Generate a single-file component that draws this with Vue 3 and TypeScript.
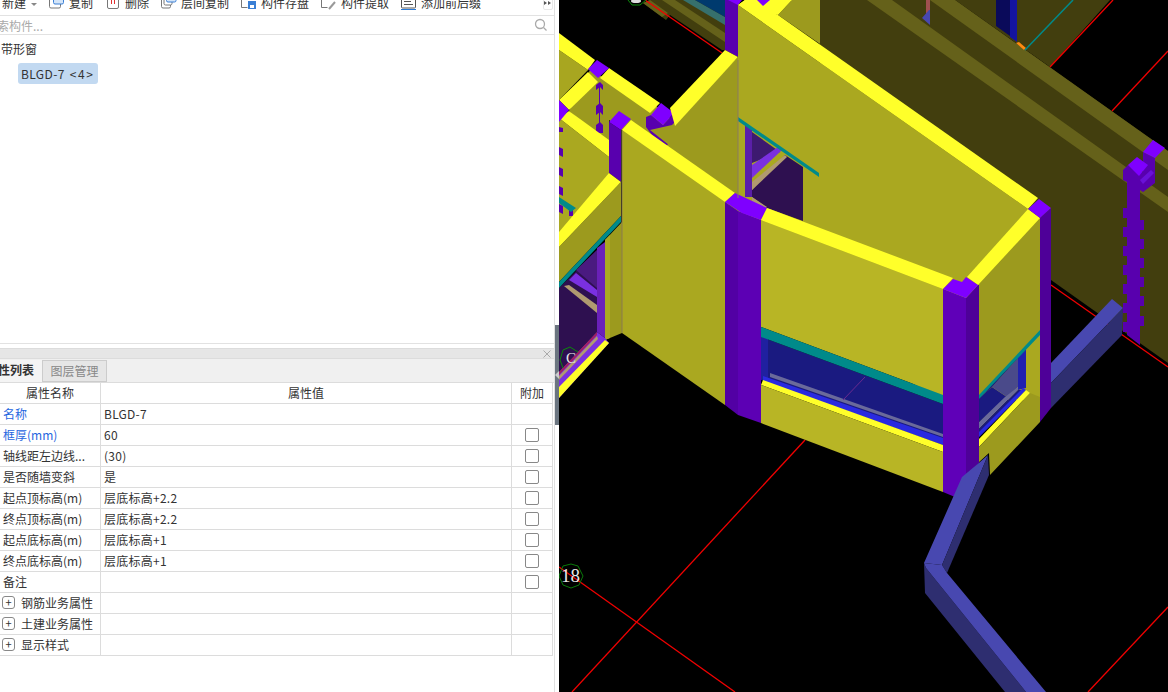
<script setup lang="ts">
type Tool = { name: string; icon: string };
type Row = { label: string; value?: string; blue?: boolean; check?: boolean; group?: boolean };

const tools: Tool[] = [
  { name: "复制", icon: "copy" },
  { name: "删除", icon: "del" },
  { name: "层间复制", icon: "floor" },
  { name: "构件存盘", icon: "save" },
  { name: "构件提取", icon: "pick" },
  { name: "添加前后缀", icon: "fix" },
];

const rows: Row[] = [
  { label: "名称", value: "BLGD-7", blue: true },
  { label: "框厚(mm)", value: "60", blue: true, check: true },
  { label: "轴线距左边线...", value: "(30)", check: true },
  { label: "是否随墙变斜", value: "是", check: true },
  { label: "起点顶标高(m)", value: "层底标高+2.2", check: true },
  { label: "终点顶标高(m)", value: "层底标高+2.2", check: true },
  { label: "起点底标高(m)", value: "层底标高+1", check: true },
  { label: "终点底标高(m)", value: "层底标高+1", check: true },
  { label: "备注", check: true },
  { label: "钢筋业务属性", group: true },
  { label: "土建业务属性", group: true },
  { label: "显示样式", group: true },
];

const Y = "#ffff2a";
const P = "#7f00ff";
const PD = "#5800ae";
const PE = "#4e0098";
const O = "#aaa820";
const OD = "#9c9a1e";
const OB = "#b8b525";
const DK = "#423e0e";
const BD = "#65611a";
const T = "#008a8a";
const IN = "#4848b0";
const IS = "#2e2e70";

// 背景墙和红色轴线分开画，后面的盖住前面的
const back: [string, string][] = [
  [DK, "643,3 666,20 670,15 722,50 725,50 725,0 650,0"],
  [BD, "662,0 725,42 725,33 675,0"],
  [BD, "650,0 668,13 662,17 643,3"],
  ["#36706c", "683,0 725,25 725,17 695,0"],
  ["#003a6e", "695,0 725,0 725,17"],
  [DK, "955,0 1110,0 1050,67"],
  [DK, "820,0 955,0 1168,151 1168,363 1051,280 1040,272 820,100"],
  [BD, "930,0 955,0 1168,151 1168,170"],
  [BD, "867,0 892,0 1168,197 1168,212"],
  ["#0a0a5a", "996,0 1010,0 1010,36 996,26"],
  ["#1414a0", "1010,0 1017,0 1017,42 1010,37"],
  ["#ff8a10", "1016,43 1019,42 1026,48 1024,50"],
  ["#a05050", "926,0 930,0 930,10 926,14"],
  [IN, "922,18 929,10 930,10 930,25"],
];

const scene: [string, string][] = [
  // 右侧竖向构件
  [PD, "1143,152 1155,158 1155,183 1143,192"],
  [P, "1143,152 1153,140 1165,148 1155,158"],
  [PD, "1123,170 1128,165 1155,178 1143,192 1140,190 1140,345 1127,335 1127,182 1123,180"],
  ["#6a10d8", "1140,180 1151,170 1154,173 1143,184"],
  [P, "1128,165 1137,157 1148,165 1139,176"],
  // 主墙和窗洞
  [PD, "725,0 738,0 738,57 725,50"],
  [P, "728,0 742,0 738,5"],
  [O, "738,5 1028,209 1040,218 1040,400 943,400 761,300 738,300"],
  [OD, "778,15 792,0 820,0 820,44"],
  [Y, "768,13 792,0 782,0 768,0 745,0 738,5 778,15"],
  [Y, "738,5 745,0 778,15 1038,198 1028,209"],
  [P, "757,0 770,0 763,6"],
  [Y, "768,13 782,0 792,0 778,15"],
  ["#5a1fa8", "745,125 752,130 752,197 745,197"],
  ["#2e1050", "752,190 785,155 803,167 803,221 767,208 752,197"],
  ["#3d1a70", "752,132 780,152 752,163"],
  ["#7a30e0", "752,165 778,147 782,150 752,178"],
  ["#b09a70", "752,182 785,155 787,157 752,190"],
  ["#b09a70", "752,197 767,207 765,208 752,202"],
  [T, "738,117 819,173 819,177 738,121"],
  // 左上
  ["#a8a620", "559,50 588,70 559,100"],
  [OD, "569,111 590,70 655,105 672,120 738,170 738,300 622,130 609,120 609,145"],
  [Y, "559,33 595,60 588,70 559,50"],
  [Y, "559,100 588,72 598,82 569,110"],
  [Y, "609,68 660,103 650,113 600,78"],
  [P, "588,69 597,60 609,68 598,78"],
  [PD, "599,83 600,83 600,125 599,125"],
  [PD, "596,85 600,82 603,85 603,90 600,87 596,90"],
  [PD, "596,106 600,103 603,106 603,115 600,112 596,115"],
  [PD, "596,125 600,122 603,125 603,133 596,133"],
  [O, "559,118 609,157 609,175 559,236"],
  [Y, "559,118 569,111 609,140 609,157"],
  [P, "559,100 569,110 559,122"],
  [PD, "559,127 563,128 563,132 559,132"],
  [PD, "559,147 563,149 563,157 559,155"],
  [PD, "559,167 563,169 563,177 559,175"],
  [PD, "559,186 563,188 563,196 559,194"],
  [PD, "559,204 563,206 563,214 559,212"],
  [PD, "569,208 573,210 573,216 569,216"],
  [T, "559,197 576,208 571,212 559,203"],
  [PD, "646,117 651,115 663,125 674,113 674,137 663,150 646,127"],
  [P, "651,115 661,103 674,113 663,125"],
  [PD, "609,122 621,130 621,182 609,173"],
  [P, "609,122 619,111 631,119 621,130"],
  // 中部墙
  [OD, "672,125 738,57 738,200 650,130"],
  [Y, "670,108 725,50 738,57 675,126"],
  [O, "622,130 725,202 725,405 622,333"],
  [Y, "622,130 631,120 735,193 725,202"],
  // 左下窗
  [OD, "559,247 621,182 621,216 559,282"],
  [Y, "559,232 609,173 621,182 559,247"],
  ["#2e1050", "559,288 597,250 597,332 559,372"],
  ["#4a1a80", "576,270 597,250 597,288"],
  ["#7a30e0", "569,280 576,273 597,290 597,297"],
  ["#b09a70", "564,286 569,285 597,305 597,313"],
  ["#6a20b8", "597,248 605,242 605,338 597,332"],
  [OD, "605,240 622,222 622,333 605,340"],
  [O, "605,240 610,235 610,338 605,340"],
  [T, "559,282 621,216 621,222 559,288"],
  ["#7a30e0", "559,372 597,332 605,338 609,343 559,398"],
  ["#b09a70", "559,376 597,336 598,339 559,380"],
  ["#a02060", "559,372 597,332 597,335 559,375"],
  [Y, "559,387 605,340 609,343 559,398"],
  // 转角柱
  ["#5200a4", "725,202 738,211 738,415 725,405"],
  ["#5c00b4", "738,211 761,220 761,423 738,415"],
  [P, "725,202 735,193 767,208 761,220 742,213"],
  // 前窗墙
  [OB, "761,220 943,289 943,395 761,327"],
  [Y, "761,220 767,208 953,278 943,289"],
  ["#1a1a80", "761,337 943,404 943,445 761,380"],
  ["#2020a0", "761,333 768,336 768,378 761,380"],
  ["#6a6a9a", "770,373 943,434 943,437 770,377"],
  ["#2a2ae0", "763,376 943,438 943,445 763,381"],
  [T, "761,327 943,395 943,404 761,337"],
  [Y, "763,380 943,445 943,452 761,385"],
  [OB, "761,385 943,452 943,492 761,423"],
  // 右转角窗
  ["#1a1a80", "978,399 992,387 1007,397 978,423"],
  ["#4a4a8a", "992,387 1018,358 1018,387 1007,397"],
  ["#1a1a80", "978,399 1018,355 1018,358 992,387"],
  ["#6a6a9a", "978,423 1005,397 1018,387 1018,390 978,430"],
  ["#1a1a80", "978,430 1018,390 1026,390 978,438"],
  ["#2020b0", "1018,355 1026,348 1026,388 1018,390"],
  ["#2a2ae0", "978,433 1023,388 1026,390 978,438"],
  [Y, "978,440 1026,390 1030,393 978,448"],
  [O, "1026,348 1040,335 1040,397 1030,393"],
  [OD, "978,448 1030,393 1040,397 1040,422 990,475 989,453 978,463"],
  [OD, "978,285 1040,218 1040,330 978,396"],
  [T, "978,396 1040,330 1040,335 978,400"],
  [Y, "967,277 1028,209 1040,218 978,285"],
  // 连梁（在柱子后）
  [IN, "1051,363 1112,299 1123,308 1051,383"],
  [IS, "1051,383 1123,308 1122,335 1051,408"],
  [PE, "1040,218 1051,208 1051,408 1040,422"],
  [P, "1028,209 1039,199 1051,208 1040,218"],
  ["#5f00b8", "943,289 966,298 966,478 955,497 943,492"],
  [PE, "966,298 978,285 979,285 979,463 966,477"],
  [P, "943,289 953,279 962,282 966,277 978,285 966,298"],
  // 下方连梁
  [IN, "962,477 980,462 988,455 942,565 924,563"],
  [IS, "988,455 989,475 947,573 942,565"],
  [IS, "924,563 925,593 1005,692 1026,692 926,568"],
  [IN, "924,563 942,565 947,573 1046,692 1026,692 926,568"],
];

// 梯状构件的小齿
const teethLeft = [208, 227, 246, 265, 284, 303, 322];
const teethRight = [220, 239, 258, 277, 296, 316];

const redLines = [
  [645, 0, 722, 53],
  [1113, 0, 1050, 67],
  [1168, 51, 1112, 111],
  [1051, 285, 1168, 367],
  [805, 440, 572, 692],
  [559, 567, 735, 692],
  [1168, 607, 1088, 692],
];
</script>

<template>
  <div class="app">
    <aside class="panel">
      <div class="toolbar">
        <span class="tool new">新建<i class="caret"></i></span>
        <span v-for="t in tools" :key="t.name" class="tool">
          <svg class="tool-icon" viewBox="0 0 16 20" width="16" height="20">
            <template v-if="t.icon === 'copy'">
              <rect x="0.5" y="5" width="11" height="10" rx="1.5" fill="#fff" stroke="#777" />
              <rect x="4.5" y="0" width="10" height="11" rx="1.5" fill="#d4e5f8" stroke="#3a7fd5" />
            </template>
            <template v-else-if="t.icon === 'del'">
              <rect x="2.5" y="3" width="11" height="12.5" rx="1.5" fill="#fff" stroke="#777" />
              <path d="M6.5 3v8M9.5 3v8" stroke="#e03030" />
            </template>
            <template v-else-if="t.icon === 'floor'">
              <rect x="0.5" y="5" width="9" height="10" rx="1.5" fill="#fff" stroke="#777" />
              <rect x="3" y="3" width="8" height="9" rx="1.5" fill="#fff" stroke="#777" />
              <rect x="5.5" y="0" width="9.5" height="9" rx="1.5" fill="#d4e5f8" stroke="#3a7fd5" />
            </template>
            <template v-else-if="t.icon === 'save'">
              <path d="M.5 2v12.5h6M10.5 2v5" fill="none" stroke="#777" />
              <rect x="7" y="8" width="8" height="8" fill="#3a7fd5" />
              <rect x="9" y="12" width="4" height="3" fill="#fff" />
            </template>
            <template v-else-if="t.icon === 'pick'">
              <path d="M.5 2v12.5h6M10.5 2v4" fill="none" stroke="#777" />
              <path d="M8 16l6-7" stroke="#999" stroke-width="2" />
            </template>
            <template v-else>
              <rect x="0.5" y="3" width="14" height="12" rx="1" fill="none" stroke="#555" />
              <path d="M3 8.5h7M3 11.5h9" stroke="#555" />
              <path d="M0 16.5h15" stroke="#2b7bd8" />
            </template>
          </svg>
          {{ t.name }}
        </span>
        <span class="more">
          <svg viewBox="0 0 8 4" width="8" height="4">
            <path d="M0 0l3 2-3 2zM4 0l3 2-3 2z" fill="#555" />
          </svg>
        </span>
      </div>

      <div class="search">
        <span class="search-text">搜索构件...</span>
        <svg viewBox="0 0 14 14" width="14" height="14">
          <circle cx="6" cy="6" r="4.5" fill="none" stroke="#aaa" stroke-width="1.3" />
          <path d="M9.5 9.5l3 3" stroke="#aaa" stroke-width="1.3" />
        </svg>
      </div>

      <div class="tree">
        <div class="tree-title">带形窗</div>
        <div class="chip"><span class="chip-name">BLGD-7</span><span class="chip-count">&lt;4&gt;</span></div>
      </div>

      <div class="title-bar">
        <svg viewBox="0 0 8 8" width="8" height="8">
          <path d="M.5.5l7 7M7.5.5l-7 7" stroke="#aaa" stroke-width="1" />
        </svg>
      </div>

      <div class="tabs">
        <span class="tab active"><b>属性列表</b></span>
        <span class="tab">图层管理</span>
      </div>

      <div class="table">
        <div class="row head">
          <div class="cell center">属性名称</div>
          <div class="cell center">属性值</div>
          <div class="cell center">附加</div>
        </div>
        <div v-for="r in rows" :key="r.label" class="row">
          <div class="cell name" :class="{ blue: r.blue }">
            <span v-if="r.group" class="plus">+</span>{{ r.label }}
          </div>
          <div class="cell value">{{ r.value }}</div>
          <div class="cell center"><span v-if="r.check" class="check"></span></div>
        </div>
      </div>
    </aside>

    <div class="gutter"><div class="handle"><i></i></div></div>

    <svg class="scene" viewBox="559 0 609 692" width="609" height="692">
      <rect x="559" y="0" width="609" height="692" fill="#000" />
      <polygon v-for="(s, i) in back" :key="'b' + i" :points="s[1]" :fill="s[0]" />
      <line v-for="(l, i) in redLines" :key="'r' + i" :x1="l[0]" :y1="l[1]" :x2="l[2]" :y2="l[3]" stroke="#f00000" stroke-width="1.3" />
      <line x1="1025" y1="50" x2="1073" y2="0" stroke="#008a8a" stroke-width="1.5" />

      <polygon v-for="(s, i) in scene" :key="'s' + i" :points="s[1]" :fill="s[0]" />
      <rect v-for="y in teethLeft" :key="'tl' + y" x="1123" :y="y" width="5" height="10" :fill="PD" />
      <rect v-for="y in teethRight" :key="'tr' + y" x="1139" :y="y" width="5" height="10" :fill="PD" />

      <line x1="622" y1="130" x2="622" y2="333" stroke="#8a7a50" />
      <line x1="738" y1="60" x2="738" y2="198" stroke="#8a7a60" />
      <line x1="843" y1="400" x2="865" y2="377" stroke="#6a2a90" />

      <path d="M628 0l4 5h8l6-5" fill="none" stroke="#0a8a0a" />
      <ellipse cx="636" cy="1" rx="5" ry="2" fill="#ddd" />
      <polyline points="563,368 560,360 563,350 570,347 578,352" fill="none" stroke="#0a8a0a" />
      <text x="566" y="363" class="axis small">C</text>
      <polygon points="571,564 578,566 583,576 579,585 571,588 563,585 559,576 563,566" fill="none" stroke="#0a7a0a" />
      <text x="561" y="582" class="axis">18</text>
    </svg>
  </div>
</template>

<style scoped>
.app {
  display: flex;
  width: 1168px;
  height: 692px;
  overflow: hidden;
  background: #fff;
  font-family: "Noto Sans CJK SC", "Noto Sans", sans-serif;
  font-size: 12px;
  color: #333;
}

.panel {
  width: 555px;
  flex: none;
  display: flex;
  flex-direction: column;
  border-right: 1px solid #e0e0e0;
  box-sizing: border-box;
  overflow: hidden;
}

.toolbar {
  height: 16px;
  flex: none;
  display: flex;
  gap: 12px;
  padding-left: 2px;
  border-bottom: 1px solid #e2e2e2;
  box-sizing: border-box;
  overflow: hidden;
  position: relative;
}

.tool {
  display: flex;
  align-items: center;
  height: 20px;
  margin-top: -7px;
  line-height: 20px;
  white-space: nowrap;
}

.tool-icon {
  margin-right: 4px;
  flex: none;
  overflow: visible;
}

.new {
  width: 35px;
}

.caret {
  margin-left: 5px;
  width: 0;
  height: 0;
  margin-top: 2px;
  border-left: 3px solid transparent;
  border-right: 3px solid transparent;
  border-top: 3px solid #888;
}

.more {
  position: absolute;
  right: 1px;
  top: -2px;
  width: 10px;
  height: 12px;
  display: flex;
  justify-content: center;
  padding-top: 2px;
  box-sizing: border-box;
  border: 1px solid #e8e8e8;
  border-radius: 2px;
}

.more svg {
  display: block;
}

.search {
  height: 19px;
  flex: none;
  display: flex;
  align-items: center;
  justify-content: space-between;
  padding-right: 6px;
  border-bottom: 1px solid #e2e2e2;
  color: #aaa;
  box-sizing: border-box;
  overflow: hidden;
}

.search-text {
  margin-left: -15px;
}

.tree {
  height: 309px;
  flex: none;
  border-bottom: 1px solid #e2e2e2;
  box-sizing: border-box;
  padding-top: 5px;
  padding-left: 1px;
}

.tree-title {
  height: 18px;
  line-height: 18px;
}

.chip {
  margin: 5px 0 0 17px;
  width: 80px;
  height: 21px;
  line-height: 21px;
  padding-left: 3px;
  box-sizing: border-box;
  background: #c2d9f1;
  border-radius: 3px;
  white-space: nowrap;
}

.chip-name {
  letter-spacing: 0.4px;
}

.chip-count {
  margin-left: 5px;
  letter-spacing: 1.5px;
}

.title-bar {
  margin-top: 4px;
  height: 11px;
  flex: none;
  display: flex;
  align-items: center;
  justify-content: flex-end;
  padding-right: 3px;
  background: #e6e6e6;
  border-top: 1px solid #dcdcdc;
  border-bottom: 1px solid #dcdcdc;
  box-sizing: border-box;
}

.tabs {
  height: 24px;
  flex: none;
  display: flex;
  background: #f0f0f0;
  border-bottom: 1px solid #dcdcdc;
  box-sizing: border-box;
}

.tab {
  width: 65px;
  line-height: 20px;
  margin-top: 1px;
  text-align: center;
  color: #888;
  background: #e6e6e6;
  border: 1px solid #ccc;
  box-sizing: border-box;
}

.tab.active {
  width: 42px;
  color: #333;
  background: #f4f4f4;
  border: none;
  overflow: hidden;
  text-align: left;
  white-space: nowrap;
  direction: rtl;
  padding-right: 8px;
}

.table {
  width: 553px;
  flex: none;
}

.row {
  display: grid;
  grid-template-columns: 101px 411px 41px;
  height: 21px;
  border-bottom: 1px solid #dcdcdc;
  box-sizing: border-box;
}

.cell {
  border-right: 1px solid #dcdcdc;
  line-height: 20px;
  white-space: nowrap;
  overflow: hidden;
  display: flex;
  align-items: center;
  box-sizing: border-box;
}

.center {
  justify-content: center;
}

.name {
  padding-left: 3px;
}

.value {
  padding-left: 3px;
  letter-spacing: 0.25px;
}

.blue {
  color: #1f66e0;
}

.check {
  width: 14px;
  height: 14px;
  border: 1px solid #888;
  border-radius: 2px;
  box-sizing: border-box;
}

.plus {
  width: 13px;
  height: 13px;
  margin: -2px 6px 0 -1px;
  border: 1px solid #888;
  border-radius: 3px;
  box-sizing: border-box;
  font-size: 11px;
  line-height: 10px;
  text-align: center;
  flex: none;
}

.gutter {
  width: 4px;
  flex: none;
  padding-top: 325px;
  box-sizing: border-box;
}

.handle {
  height: 100px;
  background: #6b7580;
  display: flex;
  align-items: center;
}

.handle i {
  width: 0;
  height: 0;
  border-top: 4px solid transparent;
  border-bottom: 4px solid transparent;
  border-right: 4px solid #ccc;
}

.scene {
  flex: none;
  display: block;
}

.axis {
  font-family: "Liberation Serif", serif;
  font-size: 19px;
  fill: #e8e8e8;
}

.axis.small {
  font-size: 15px;
}
</style>
